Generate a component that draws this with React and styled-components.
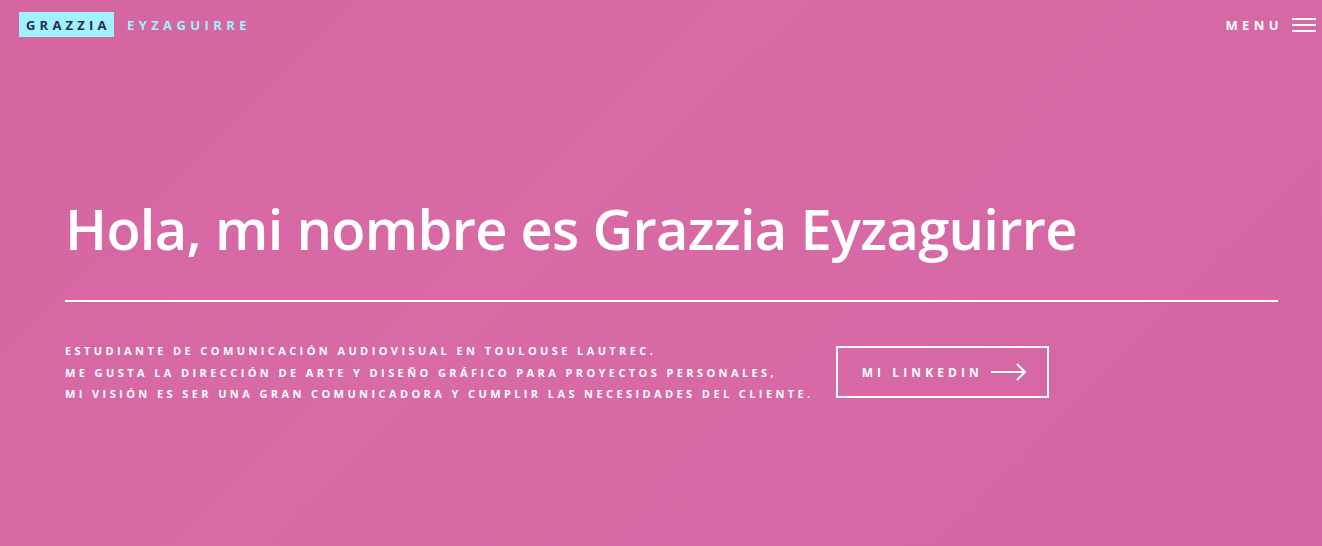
import React from "react";
import styled, { createGlobalStyle } from "styled-components";

const Global = createGlobalStyle`
  html, body { margin: 0; padding: 0; }
  body {
    background: #d567a3;
    font-family: "Open Sans", "Noto Sans", sans-serif;
  }
`;

const Page = styled.div`
  min-height: 546px;
  background: linear-gradient(135deg, #d4659f 0%, #d86aa6 40%, #d466a3 100%);
  display: flex;
  flex-direction: column;
`;

const Header = styled.header`
  display: flex;
  justify-content: space-between;
  align-items: center;
  padding: 12px 6px 0 19px;
  height: 25px;
`;

const Logo = styled.a`
  display: flex;
  align-items: center;
  gap: 13px;
  text-decoration: none;
  font-size: 13px;
  font-weight: 700;
`;

const LogoBox = styled.span`
  background: #9ef1fd;
  color: #2a2d48;
  height: 25px;
  display: flex;
  align-items: center;
  padding-left: 7px;
  width: 88px;
  letter-spacing: 4.2px;
`;

const LogoRest = styled.span`
  color: #9ef1fd;
  letter-spacing: 4.4px;
`;

const Menu = styled.button`
  display: flex;
  align-items: center;
  gap: 9px;
  background: none;
  border: 0;
  color: #fff;
  font-family: inherit;
  font-size: 13px;
  font-weight: 700;
  letter-spacing: 4.4px;
  cursor: pointer;
  padding: 0;
`;

const Burger = styled.span`
  display: flex;
  flex-direction: column;
  gap: 4px;
  width: 24px;
  span {
    height: 2px;
    background: #fff;
  }
`;

const Hero = styled.main`
  padding: 163px 44px 0 65px;
  color: #fff;
`;

const Title = styled.h1`
  margin: 0;
  font-size: 56px;
  font-weight: 600;
  line-height: 1;
  letter-spacing: -0.7px;
`;

const Rule = styled.hr`
  border: 0;
  height: 2px;
  background: #fff;
  margin: 44px 0 0;
`;

const Row = styled.div`
  display: flex;
  align-items: center;
  gap: 22px;
  margin-top: 38px;
`;

const Bio = styled.p`
  margin: 0;
  font-size: 11px;
  font-weight: 700;
  line-height: 21.5px;
  letter-spacing: 3.4px;
  white-space: nowrap;
`;

const LinkButton = styled.a`
  display: flex;
  align-items: center;
  gap: 8px;
  height: 48px;
  padding: 0 20px 0 24px;
  border: 2px solid #fff;
  color: #fff;
  text-decoration: none;
  font-size: 12px;
  font-weight: 700;
  letter-spacing: 4.1px;
`;

function App() {
  return (
    <>
      <Global />
      <Page>
        <Header>
          <Logo href="#">
            <LogoBox>GRAZZIA</LogoBox>
            <LogoRest>EYZAGUIRRE</LogoRest>
          </Logo>
          <Menu>
            MENU
            <Burger>
              <span />
              <span />
              <span />
            </Burger>
          </Menu>
        </Header>
        <Hero>
          <Title>Hola, mi nombre es Grazzia Eyzaguirre</Title>
          <Rule />
          <Row>
            <Bio>
              ESTUDIANTE DE COMUNICACIÓN AUDIOVISUAL EN TOULOUSE LAUTREC.
              <br />
              ME GUSTA LA DIRECCIÓN DE ARTE Y DISEÑO GRÁFICO PARA PROYECTOS PERSONALES,
              <br />
              MI VISIÓN ES SER UNA GRAN COMUNICADORA Y CUMPLIR LAS NECESIDADES DEL CLIENTE.
            </Bio>
            <LinkButton href="#">
              MI LINKEDIN
              <svg width="36" height="18" viewBox="0 0 36 18" fill="none" stroke="#fff" strokeWidth="2">
                <path d="M0 9h34M26 1l8 8-8 8" />
              </svg>
            </LinkButton>
          </Row>
        </Hero>
      </Page>
    </>
  );
}

export default App;
